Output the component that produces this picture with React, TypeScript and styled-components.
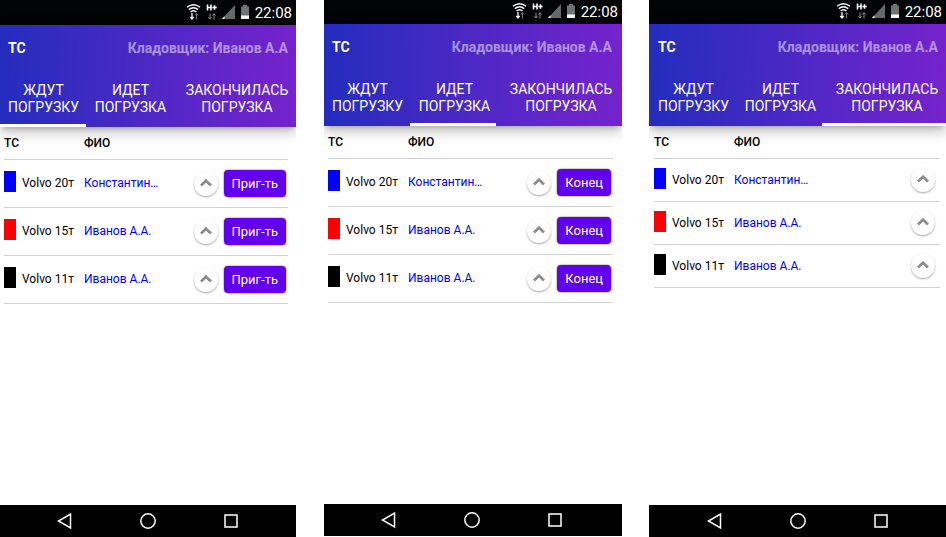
import React from "react";
import styled, { createGlobalStyle } from "styled-components";

const GlobalStyle = createGlobalStyle`
  * { box-sizing: border-box; }
  body {
    margin: 0;
    background: #fff;
    color: #000;
    font-family: Roboto, "Noto Sans", sans-serif;
    font-size: 12px;
  }
  button { font-family: inherit; cursor: pointer; }
`;

const Board = styled.main`
  display: grid;
  grid-template-columns: 296fr 28px 298fr 27px 297fr;
  min-height: 100vh;
`;

const Phone = styled.section<{ $column: number; $end: number }>`
  grid-column: ${(p) => p.$column};
  display: flex;
  flex-direction: column;
  margin-bottom: ${(p) => p.$end}px;
  overflow: hidden;
`;

const StatusBar = styled.div<{ $height: number }>`
  display: flex;
  align-items: center;
  justify-content: flex-end;
  height: ${(p) => p.$height}px;
  padding-right: 4px;
  background: #020305;
  color: #fff;
`;

const Clock = styled.time`
  margin-left: 5px;
  font-size: 15px;
  line-height: 22px;
`;

const Header = styled.header<{ $left: number; $right: number }>`
  position: relative;
  padding: 0 ${(p) => p.$right}px 0 ${(p) => p.$left}px;
  background: linear-gradient(92deg, #232dbd, #7623cc);
  color: #fff;
  box-shadow: 0 5px 5px -3px rgba(0, 0, 0, 0.2), 0 8px 10px 1px rgba(0, 0, 0, 0.08),
    0 4px 16px 0 rgba(0, 0, 0, 0.12);
`;

const TitleRow = styled.div`
  display: flex;
  align-items: center;
  justify-content: space-between;
  height: 46px;
  padding: 0 8px;
`;

const Title = styled.h1`
  margin: 0;
  font-size: 14px;
  line-height: 20px;
  font-weight: 700;
`;

const Keeper = styled.span`
  font-size: 14px;
  line-height: 20px;
  font-weight: 700;
  color: rgba(255, 255, 255, 0.5);
`;

const Tabs = styled.div`
  display: grid;
  grid-template-columns: 86px 86px 1fr;
  height: 56px;
`;

const Tab = styled.button<{ $active: boolean; $inset: number }>`
  padding: 2px 0 0 ${(p) => p.$inset}px;
  border: 0;
  border-bottom: 3px solid ${(p) => (p.$active ? "#fff" : "transparent")};
  background: none;
  color: #fff;
  font-size: 14px;
  line-height: 17px;
  font-weight: 400;
  text-transform: uppercase;
`;

const Content = styled.div<{ $left: number; $right: number }>`
  flex: 1;
  padding: 0 ${(p) => p.$right}px 0 ${(p) => p.$left}px;
`;

const Table = styled.table`
  width: 100%;
  border-collapse: separate;
  border-spacing: 0;
  table-layout: fixed;
`;

const HeadCell = styled.th<{ $width?: number }>`
  width: ${(p) => (p.$width ? `${p.$width}px` : "auto")};
  height: 33px;
  padding: 0;
  border-bottom: 1px solid #d3d3d3;
  font-size: 12px;
  font-weight: 500;
  text-align: left;
`;

const Cell = styled.td<{ $height: number }>`
  height: ${(p) => p.$height}px;
  padding: 0;
  border-bottom: 1px solid #d3d3d3;
  line-height: 25px;
  white-space: nowrap;
`;

const Vehicle = styled.div`
  display: flex;
  align-items: flex-start;
  gap: 6px;
`;

const Swatch = styled.span<{ $color: string }>`
  width: 12px;
  height: 21px;
  background: ${(p) => p.$color};
`;

const Driver = styled.a`
  display: block;
  color: #00f;
  text-decoration: none;
`;

const Actions = styled.div<{ $end: number }>`
  display: flex;
  align-items: center;
  justify-content: flex-end;
  gap: 6px;
  padding-right: ${(p) => p.$end}px;
`;

const RoundButton = styled.button`
  display: grid;
  place-items: center;
  width: 24px;
  height: 24px;
  padding: 0 0 2px;
  border: 0;
  border-radius: 50%;
  background: #fff;
  box-shadow: 0 1px 2px rgba(0, 0, 0, 0.35);
`;

const ActionButton = styled.button`
  height: 27px;
  padding: 0 8px;
  border: 0;
  border-radius: 4px;
  background: #6200ee;
  box-shadow: 0 0 1px 1px rgba(0, 0, 0, 0.2);
  color: #fff;
  font-size: 13px;
  font-weight: 400;
`;

const NavBar = styled.nav<{ $right: number }>`
  display: flex;
  align-items: center;
  justify-content: center;
  gap: 63px;
  height: 32px;
  padding-right: ${(p) => p.$right}px;
  background: #000;
`;

const NavButton = styled.button`
  display: flex;
  padding: 0;
  border: 0;
  background: none;
`;

const StatusIcons = () => (
  <svg width="64" height="20" viewBox="0 0 64 20" aria-hidden="true">
    <g fill="none" stroke="#fff" strokeWidth="1.4">
      <path d="M1 4.200Q7.500 -.8 14 4.200" />
      <path d="M2.800 6.600Q7.500 2.800 12.200 6.600" />
      <path d="M4.600 9Q7.500 6.400 10.400 9" />
    </g>
    <path d="M6 10v6M4.200 13.800L6 16l1.800-2.200" fill="none" stroke="#fff" strokeWidth="1.300" />
    <path d="M10.500 16.500V11M9 12.500l1.500-2 1.500 2" fill="none" stroke="#777" />
    <path d="M21.500 1.500v6M25 1.500v6M21.500 4.500H25M26.300 4.500h4.400M28.500 2.300v4.400" fill="none" stroke="#fff" strokeWidth="1.600" />
    <path d="M24 10.500v5.500M22.500 14l1.500 2 1.500-2M28 16.500V11M26.500 12.500l1.500-2 1.500 2" fill="none" stroke="#8a8a8a" />
    <path d="M49 2v14H36z" fill="#66686a" />
    <path d="M38.500 13.300V16H36z" fill="#fff" />
    <path d="M57 2h4v1.500h2V16h-8V3.500h2z" fill="#707274" />
    <path d="M55 12.500h8V16h-8z" fill="#fff" />
  </svg>
);

const Chevron = () => (
  <svg width="12" height="8" viewBox="0 0 12 8" aria-hidden="true">
    <path d="M1 6.500L6 1.800l5 4.700" fill="none" stroke="#8c8c8c" strokeWidth="2.800" />
  </svg>
);

const BackIcon = () => (
  <svg width="20" height="18" viewBox="0 0 20 18" aria-hidden="true">
    <path d="M15.500 2v14L3.500 9z" fill="none" stroke="#fff" strokeWidth="1.500" />
  </svg>
);

const HomeIcon = () => (
  <svg width="20" height="18" viewBox="0 0 20 18" aria-hidden="true">
    <circle cx="10" cy="9" r="7.200" fill="none" stroke="#fff" strokeWidth="1.500" />
  </svg>
);

const RecentIcon = () => (
  <svg width="20" height="18" viewBox="0 0 20 18" aria-hidden="true">
    <rect x="4" y="3" width="12" height="12" fill="none" stroke="#fff" strokeWidth="1.500" />
  </svg>
);

const tabs = [
  { lines: ["Ждут", "погрузку"], inset: 1 },
  { lines: ["Идет", "погрузка"], inset: 3 },
  { lines: ["Закончилась", "погрузка"], inset: 6 },
];

const rows = [
  { color: "#0000ff", vehicle: "Volvo 20т", driver: "Константин…" },
  { color: "#ff0000", vehicle: "Volvo 15т", driver: "Иванов А.А." },
  { color: "#000000", vehicle: "Volvo 11т", driver: "Иванов А.А." },
];

const phones = [
  { column: 1, end: 0, status: 25, barLeft: 0, barRight: 0, left: 4, right: 8, rowHeight: 48, action: "Приг-ть", actionEnd: 2 },
  { column: 3, end: 1, status: 24, barLeft: 0, barRight: 2, left: 4, right: 9, rowHeight: 48, action: "Конец", actionEnd: 2 },
  { column: 5, end: 0, status: 24, barLeft: 1, barRight: 0, left: 5, right: 6, rowHeight: 43, action: "", actionEnd: 5 },
];

export default function App() {
  return (
    <>
      <GlobalStyle />
      <Board>
        {phones.map((phone, active) => (
          <Phone key={phone.column} $column={phone.column} $end={phone.end}>
            <StatusBar $height={phone.status}>
              <StatusIcons />
              <Clock>22:08</Clock>
            </StatusBar>
            <Header $left={phone.barLeft} $right={phone.barRight}>
              <TitleRow>
                <Title>ТС</Title>
                <Keeper>Кладовщик: Иванов А.А</Keeper>
              </TitleRow>
              <Tabs role="tablist">
                {tabs.map((tab, i) => (
                  <Tab key={i} role="tab" aria-selected={i === active} $active={i === active} $inset={tab.inset}>
                    {tab.lines[0]}
                    <br />
                    {tab.lines[1]}
                  </Tab>
                ))}
              </Tabs>
            </Header>
            <Content $left={phone.left} $right={phone.right}>
              <Table>
                <thead>
                  <tr>
                    <HeadCell $width={80}>ТС</HeadCell>
                    <HeadCell $width={80}>ФИО</HeadCell>
                    <HeadCell aria-label="Действия" />
                  </tr>
                </thead>
                <tbody>
                  {rows.map((row) => (
                    <tr key={row.vehicle}>
                      <Cell $height={phone.rowHeight}>
                        <Vehicle>
                          <Swatch $color={row.color} />
                          {row.vehicle}
                        </Vehicle>
                      </Cell>
                      <Cell $height={phone.rowHeight}>
                        <Driver href="#">{row.driver}</Driver>
                      </Cell>
                      <Cell $height={phone.rowHeight}>
                        <Actions $end={phone.actionEnd}>
                          <RoundButton aria-label="Вверх">
                            <Chevron />
                          </RoundButton>
                          {phone.action && <ActionButton>{phone.action}</ActionButton>}
                        </Actions>
                      </Cell>
                    </tr>
                  ))}
                </tbody>
              </Table>
            </Content>
            <NavBar $right={phone.barRight}>
              <NavButton aria-label="Назад"><BackIcon /></NavButton>
              <NavButton aria-label="Домой"><HomeIcon /></NavButton>
              <NavButton aria-label="Недавние"><RecentIcon /></NavButton>
            </NavBar>
          </Phone>
        ))}
      </Board>
    </>
  );
}
